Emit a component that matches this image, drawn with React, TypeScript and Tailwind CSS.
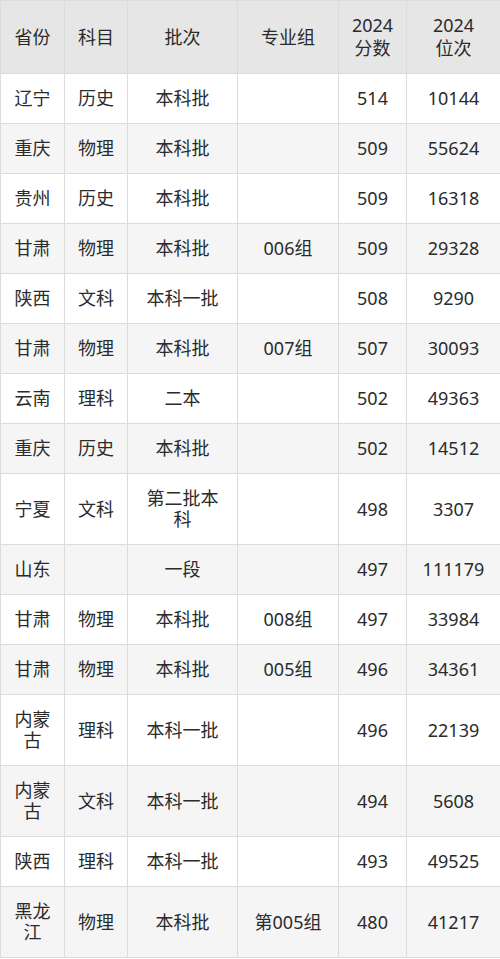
import React from 'react'

type Row = [string, string, string, string, string, string]

const rows: Row[] = [
  ['辽宁', '历史', '本科批', '', '514', '10144'],
  ['重庆', '物理', '本科批', '', '509', '55624'],
  ['贵州', '历史', '本科批', '', '509', '16318'],
  ['甘肃', '物理', '本科批', '006组', '509', '29328'],
  ['陕西', '文科', '本科一批', '', '508', '9290'],
  ['甘肃', '物理', '本科批', '007组', '507', '30093'],
  ['云南', '理科', '二本', '', '502', '49363'],
  ['重庆', '历史', '本科批', '', '502', '14512'],
  ['宁夏', '文科', '第二批本科', '', '498', '3307'],
  ['山东', '', '一段', '', '497', '111179'],
  ['甘肃', '物理', '本科批', '008组', '497', '33984'],
  ['甘肃', '物理', '本科批', '005组', '496', '34361'],
  ['内蒙古', '理科', '本科一批', '', '496', '22139'],
  ['内蒙古', '文科', '本科一批', '', '494', '5608'],
  ['陕西', '理科', '本科一批', '', '493', '49525'],
  ['黑龙江', '物理', '本科批', '第005组', '480', '41217'],
]

const cell = 'border border-[#dcdcdc] px-[12px] py-[14px] text-center align-middle leading-[21px]'
const head = 'border border-[#dcdcdc] px-[8px] py-[13px] text-center align-middle leading-[23px] font-normal'

export default function App() {
  return (
    <div
      className="w-[500px] bg-white text-[18px] text-[#2b2b2b]"
      style={{ fontFamily: '"Noto Sans", "Noto Sans CJK SC", sans-serif' }}
    >
      <table className="w-[500px] table-fixed border-collapse">
        <colgroup>
          <col className="w-[64px]" />
          <col className="w-[63px]" />
          <col className="w-[110px]" />
          <col className="w-[101px]" />
          <col className="w-[68px]" />
          <col className="w-[94px]" />
        </colgroup>
        <thead>
          <tr className="bg-[#e6e6e6]">
            <th className={head}>省份</th>
            <th className={head}>科目</th>
            <th className={head}>批次</th>
            <th className={head}>专业组</th>
            <th className={head}>
              2024
              <br />
              分数
            </th>
            <th className={head}>
              2024
              <br />
              位次
            </th>
          </tr>
        </thead>
        <tbody>
          {rows.map((r, i) => (
            <tr key={i} className={i % 2 === 1 ? 'bg-[#f5f5f5]' : 'bg-white'}>
              {r.map((c, j) => (
                <td key={j} className={cell}>
                  {c}
                </td>
              ))}
            </tr>
          ))}
        </tbody>
      </table>
    </div>
  )
}
